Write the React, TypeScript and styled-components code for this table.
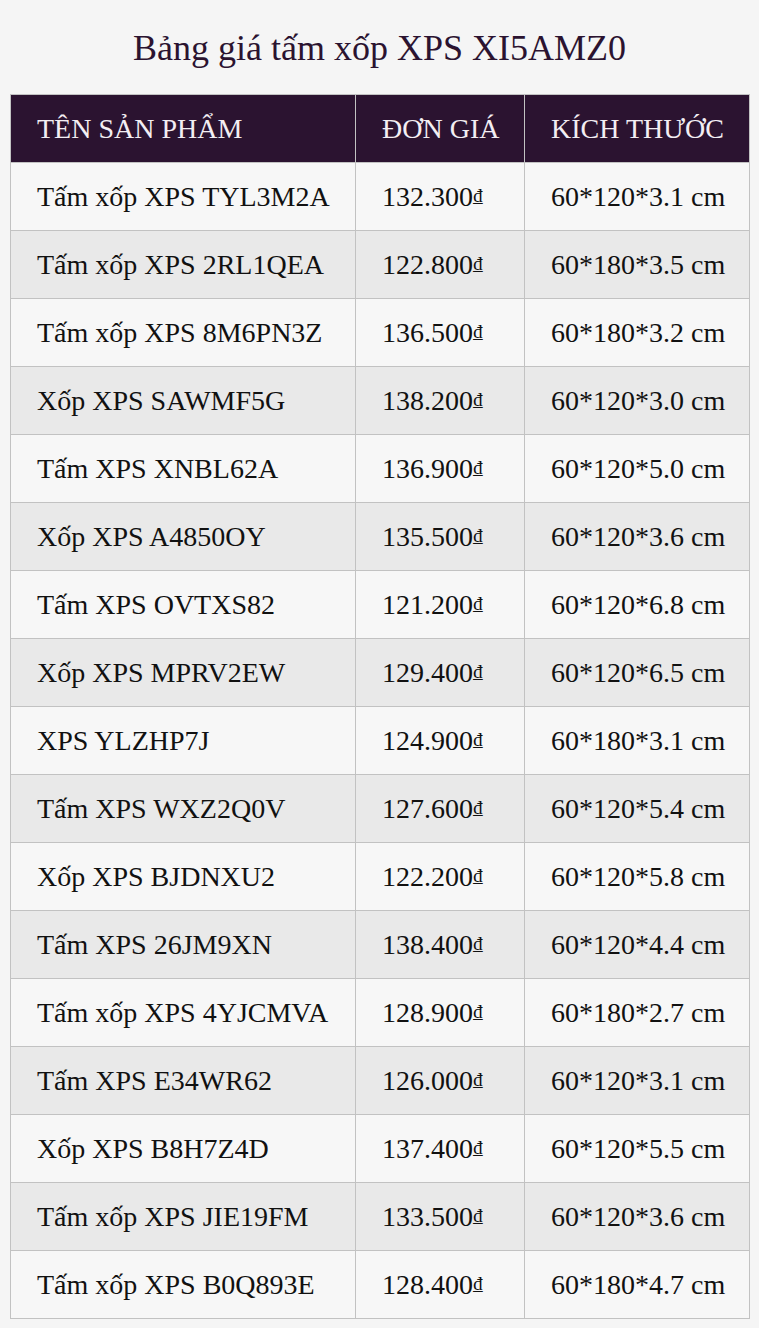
import React from "react";
import styled, { createGlobalStyle } from "styled-components";

const GlobalStyle = createGlobalStyle`
  html, body {
    margin: 0;
    padding: 0;
    background: #f5f5f5;
  }

  * {
    box-sizing: border-box;
  }
`;

const Page = styled.div`
  padding: 27px 10px 10px;

  font-family: "Liberation Serif", "Times New Roman", serif;
`;

const Title = styled.h1`
  margin: 0 0 25px;

  font-size: 36px;
  font-weight: normal;
  line-height: normal;
  text-align: center;
  color: #2b1330;
`;

const Table = styled.table`
  width: 739px;

  border-collapse: collapse;
  table-layout: fixed;
`;

const HeadCell = styled.th<{ $width: number }>`
  width: ${({ $width }) => $width}px;
  padding: 17px 26px;

  background-color: #2b1330;
  border: 1px solid #c2c2c2;

  font-size: 28px;
  font-weight: normal;
  line-height: 33px;
  text-align: left;
  color: #f3eef3;
  white-space: nowrap;
`;

const Row = styled.tr<{ $even: boolean }>`
  background-color: ${({ $even }) => ($even ? "#e9e9e9" : "#f7f7f7")};
`;

const Cell = styled.td`
  padding: 17px 26px;

  border: 1px solid #c2c2c2;

  font-size: 28px;
  line-height: 33px;
  color: #111;
  white-space: nowrap;
`;

const Currency = styled.span`
  font-size: 19px;
  vertical-align: 4px;
  line-height: 1;
`;

type Product = {
  name: string;
  price: string;
  size: string;
};

const PRODUCTS: Product[] = [
  { name: "Tấm xốp XPS TYL3M2A", price: "132.300", size: "60*120*3.1 cm" },
  { name: "Tấm xốp XPS 2RL1QEA", price: "122.800", size: "60*180*3.5 cm" },
  { name: "Tấm xốp XPS 8M6PN3Z", price: "136.500", size: "60*180*3.2 cm" },
  { name: "Xốp XPS SAWMF5G", price: "138.200", size: "60*120*3.0 cm" },
  { name: "Tấm XPS XNBL62A", price: "136.900", size: "60*120*5.0 cm" },
  { name: "Xốp XPS A4850OY", price: "135.500", size: "60*120*3.6 cm" },
  { name: "Tấm XPS OVTXS82", price: "121.200", size: "60*120*6.8 cm" },
  { name: "Xốp XPS MPRV2EW", price: "129.400", size: "60*120*6.5 cm" },
  { name: "XPS YLZHP7J", price: "124.900", size: "60*180*3.1 cm" },
  { name: "Tấm XPS WXZ2Q0V", price: "127.600", size: "60*120*5.4 cm" },
  { name: "Xốp XPS BJDNXU2", price: "122.200", size: "60*120*5.8 cm" },
  { name: "Tấm XPS 26JM9XN", price: "138.400", size: "60*120*4.4 cm" },
  { name: "Tấm xốp XPS 4YJCMVA", price: "128.900", size: "60*180*2.7 cm" },
  { name: "Tấm XPS E34WR62", price: "126.000", size: "60*120*3.1 cm" },
  { name: "Xốp XPS B8H7Z4D", price: "137.400", size: "60*120*5.5 cm" },
  { name: "Tấm xốp XPS JIE19FM", price: "133.500", size: "60*120*3.6 cm" },
  { name: "Tấm xốp XPS B0Q893E", price: "128.400", size: "60*180*4.7 cm" },
];

function App() {
  return (
    <Page>
      <GlobalStyle />
      <Title>Bảng giá tấm xốp XPS XI5AMZ0</Title>
      <Table>
        <thead>
          <tr>
            <HeadCell $width={345}>TÊN SẢN PHẨM</HeadCell>
            <HeadCell $width={169}>ĐƠN GIÁ</HeadCell>
            <HeadCell $width={225}>KÍCH THƯỚC</HeadCell>
          </tr>
        </thead>
        <tbody>
          {PRODUCTS.map((product, index) => (
            <Row key={product.name} $even={index % 2 === 1}>
              <Cell>{product.name}</Cell>
              <Cell>
                {product.price}
                <Currency>₫</Currency>
              </Cell>
              <Cell>{product.size}</Cell>
            </Row>
          ))}
        </tbody>
      </Table>
    </Page>
  );
}

export default App;
